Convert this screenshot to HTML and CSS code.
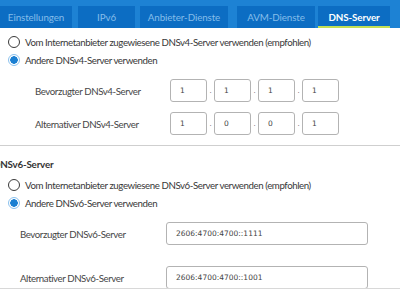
FILE: index.html
```html
<!DOCTYPE html>
<html lang="de">
  <head>
    <meta charset="UTF-8" />
    <meta name="viewport" content="width=device-width, initial-scale=1.0" />
    <title>DNS-Server</title>
    <link rel="stylesheet" href="styles.css">
  </head>
  <body>
    <nav class="tabs">
      <a class="tab tab-first">Einstellungen</a>
      <a class="tab tab-ipv6">IPv6</a>
      <a class="tab tab-anbieter">Anbieter-Dienste</a>
      <a class="tab tab-avm">AVM-Dienste</a>
      <a class="tab tab-dns active">DNS-Server</a>
    </nav>

    <main class="content">
      <section class="v4">
        <label class="radio"><span class="dot"></span>Vom Internetanbieter zugewiesene DNSv4-Server verwenden (empfohlen)</label>
        <label class="radio"><span class="dot checked"></span>Andere DNSv4-Server verwenden</label>

        <div class="v4-rows">
          <div class="ip-row">
            <span class="ip-label">Bevorzugter DNSv4-Server</span>
            <div class="octets">
              <span class="octet">1</span><span class="sep">.</span>
              <span class="octet">1</span><span class="sep">.</span>
              <span class="octet">1</span><span class="sep">.</span>
              <span class="octet">1</span>
            </div>
          </div>
          <div class="ip-row">
            <span class="ip-label">Alternativer DNSv4-Server</span>
            <div class="octets">
              <span class="octet">1</span><span class="sep">.</span>
              <span class="octet">0</span><span class="sep">.</span>
              <span class="octet">0</span><span class="sep">.</span>
              <span class="octet">1</span>
            </div>
          </div>
        </div>
      </section>

      <section class="v6">
        <h2 class="section-title">DNSv6-Server</h2>
        <label class="radio"><span class="dot"></span>Vom Internetanbieter zugewiesene DNSv6-Server verwenden (empfohlen)</label>
        <label class="radio"><span class="dot checked"></span>Andere DNSv6-Server verwenden</label>

        <div class="v6-rows">
          <div class="v6-row">
            <span class="v6-label">Bevorzugter DNSv6-Server</span>
            <span class="v6-input">2606:4700:4700::1111</span>
          </div>
          <div class="v6-row">
            <span class="v6-label">Alternativer DNSv6-Server</span>
            <span class="v6-input">2606:4700:4700::1001</span>
          </div>
        </div>
      </section>
    </main>

    <footer class="bottom-bar"></footer>
  </body>
</html>
```

FILE: styles.css
```css
body {
  margin: 0;
  padding: 0;
  width: 400px;
  height: 293px;
  overflow: hidden;
  background: #ffffff;
  font-family: "Lato", "Open Sans", sans-serif;
  font-size: 9.7px;
  letter-spacing: -0.42px;
  color: #383838;
  white-space: nowrap;
}

/* tab bar */
.tabs {
  display: flex;
  gap: 6px;
  padding-top: 6px;
  height: 22px;
  background: #1d82d4;
}
.tab {
  display: flex;
  align-items: center;
  justify-content: center;
  height: 22px;
  background: #0c6dc3;
  color: #84bdea;
  font-size: 9.8px;
  letter-spacing: -0.1px;
  box-sizing: border-box;
}
.tab-first { width: 72px; }
.tab-ipv6 { width: 57px; }
.tab-anbieter { width: 88px; margin-left: -1px; }
.tab-avm { width: 78px; margin-left: 3px; }
.tab-dns { width: 72px; margin-left: -3px; }
.tab.active {
  color: #ffffff;
  font-weight: bold;
  border-bottom: 2px solid #c3df54;
  padding-top: 2px;
}

/* radios */
.radio {
  display: flex;
  align-items: center;
  gap: 5px;
  height: 18px;
  padding-left: 8px;
}
.dot {
  width: 10px;
  height: 10px;
  border: 1.5px solid #3a3a3a;
  border-radius: 50%;
  box-sizing: content-box;
}
.dot.checked {
  border-color: #8cc2ee;
  background: radial-gradient(circle, #1a7fd2 0 3.5px, #ffffff 4px);
}

.v4 {
  padding-top: 5px;
}

.v4-rows {
  display: flex;
  flex-direction: column;
  gap: 10px;
  padding: 10px 0 10px 35px;
  border-bottom: 1px solid #cfcfcf;
}
.ip-row {
  display: flex;
  align-items: center;
}
.ip-label {
  width: 135px;
  color: #464646;
}
.octets {
  display: flex;
  align-items: center;
}
.octet {
  width: 37px;
  height: 23px;
  box-sizing: border-box;
  border: 1px solid #b3b3b3;
  border-radius: 3px;
  padding-left: 9px;
  display: flex;
  align-items: center;
  font-family: "DejaVu Sans", sans-serif;
  font-size: 7.5px;
  letter-spacing: 0;
  color: #444;
}
.sep {
  width: 7px;
  text-align: center;
  font-family: "DejaVu Sans", sans-serif;
  font-size: 7px;
  color: #666;
}

.section-title {
  margin: 0;
  padding: 12px 0 6px;
  margin-left: -7px;
  font-size: 9.8px;
  letter-spacing: -0.2px;
  font-weight: bold;
  color: #333;
}

.v6-rows {
  display: flex;
  flex-direction: column;
  gap: 21px;
  padding: 10px 0 0 20px;
}
.v6-row {
  display: flex;
  align-items: center;
}
.v6-label {
  width: 146px;
  color: #464646;
}
.v6-input {
  width: 202px;
  height: 23px;
  box-sizing: border-box;
  border: 1px solid #b3b3b3;
  border-radius: 3px;
  padding-left: 9px;
  display: flex;
  align-items: center;
  font-family: "DejaVu Sans", sans-serif;
  font-size: 7.5px;
  letter-spacing: 0;
  color: #444;
}

/* sticky bottom strip over the scrolled content */
.bottom-bar {
  position: fixed;
  left: 0;
  right: 0;
  bottom: 0;
  height: 4px;
  background: #ffffff;
  border-top: 1px solid #d8d8d8;
}
```
